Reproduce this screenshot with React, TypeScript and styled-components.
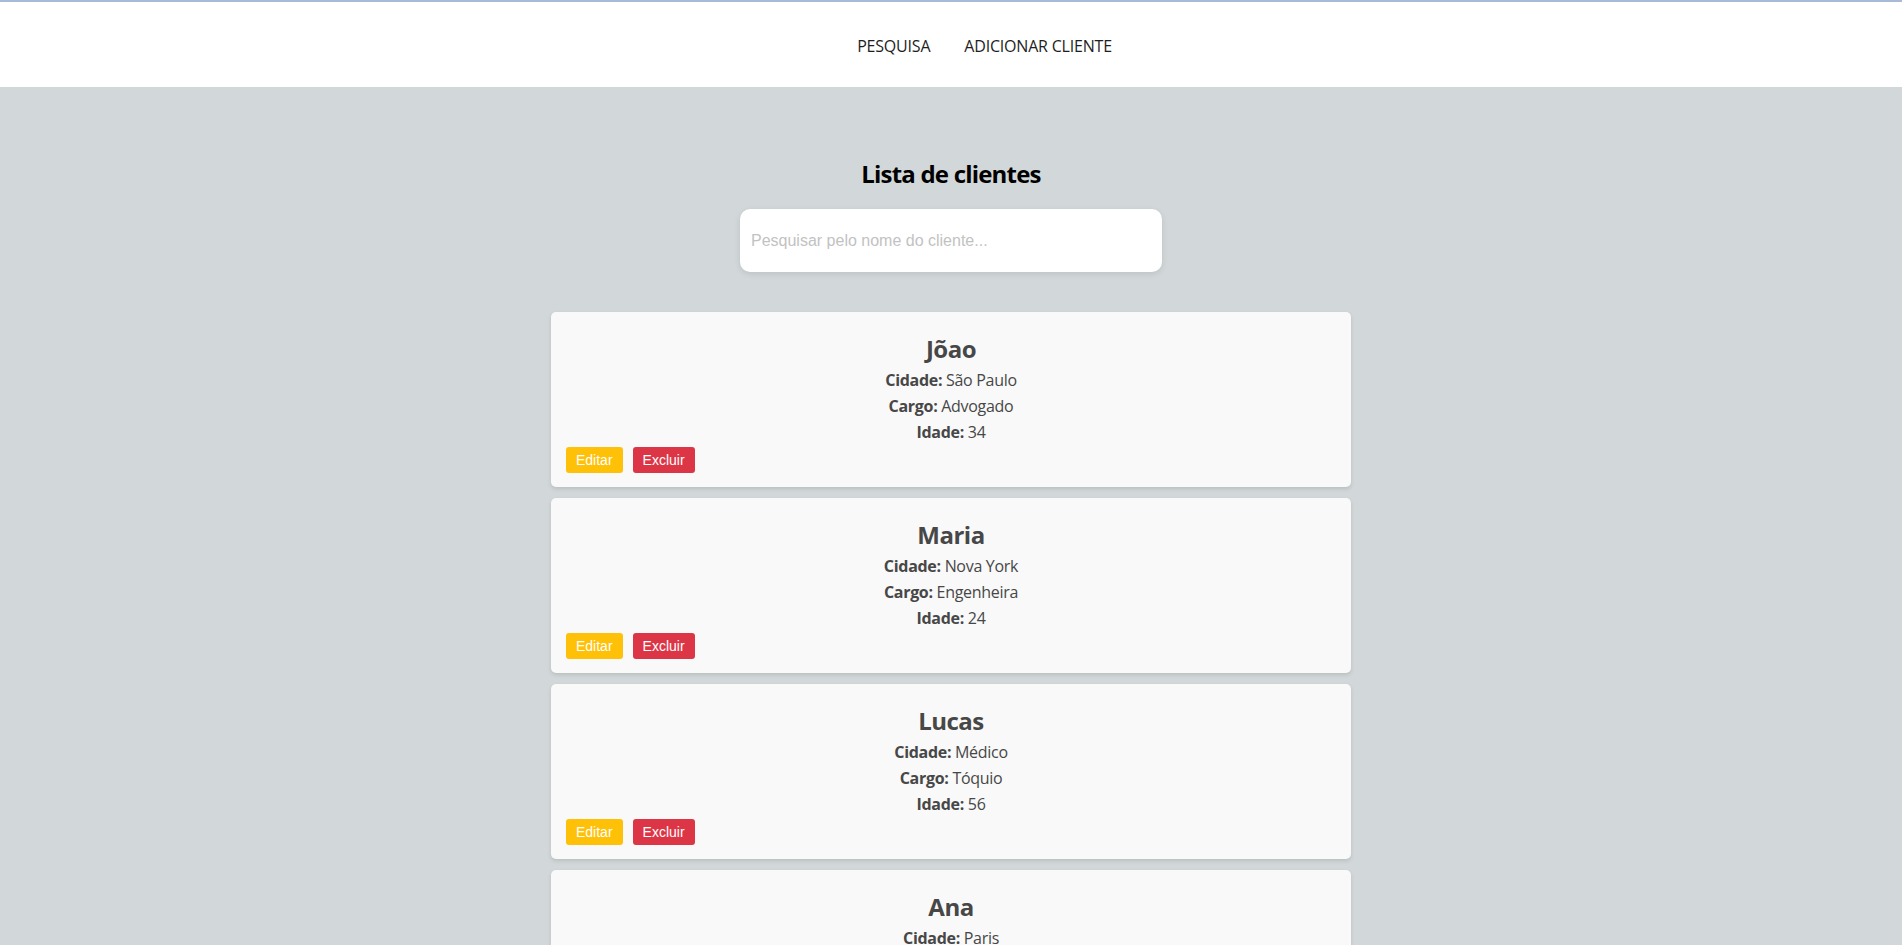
import React, { useState } from "react";
import styled, { createGlobalStyle } from "styled-components";

const GlobalStyle = createGlobalStyle`
  html, body {
    margin: 0;
    padding: 0;
    background: #d2d8d9;
    font-family: "Segoe UI", "Open Sans", "Noto Sans", sans-serif;
  }
  * { box-sizing: border-box; }
`;

const Header = styled.header`
  background: #ffffff;
  border-top: 2px solid #a9bad6;
  height: 87px;
  display: flex;
  align-items: center;
  justify-content: center;
  padding: 3px 0 0 67px;
`;

const Nav = styled.nav`
  display: flex;
  gap: 34px;
`;

const NavLink = styled.a`
  font-size: 16px;
  letter-spacing: -0.2px;
  color: #1e1e1e;
  text-decoration: none;
  text-transform: uppercase;
  cursor: pointer;
`;

const Main = styled.main`
  display: flex;
  flex-direction: column;
  align-items: center;
  padding: 70px 0 40px;
`;

const Title = styled.h2`
  margin: 0;
  font-size: 24px;
  line-height: 33px;
  letter-spacing: -0.8px;
  font-weight: 700;
  color: #000;
`;

const SearchInput = styled.input`
  margin-top: 19px;
  width: 422px;
  height: 63px;
  border: none;
  border-radius: 10px;
  padding: 0 11px;
  background: #fff;
  box-shadow: 0 2px 6px rgba(0, 0, 0, 0.1);
  font-family: "Liberation Sans", Arial, sans-serif;
  font-size: 16px;
  color: #333;
  outline: none;
  &::placeholder {
    color: #c2c2c2;
  }
`;

const List = styled.div`
  margin-top: 40px;
  width: 800px;
  display: flex;
  flex-direction: column;
  gap: 11px;
`;

const Card = styled.div`
  background: #f9f9f9;
  border-radius: 5px;
  box-shadow: 0 2px 4px rgba(0, 0, 0, 0.12);
  padding: 21px 15px 14px;
  color: #474747;
  text-align: center;
`;

const Name = styled.h3`
  margin: 0 0 4px;
  font-size: 24px;
  line-height: 32px;
  letter-spacing: -0.5px;
  font-weight: 700;
`;

const Detail = styled.p`
  margin: 0 0 4px;
  font-size: 16px;
  line-height: 22px;
  letter-spacing: -0.3px;
  strong { font-weight: 700; }
`;

const Actions = styled.div`
  display: flex;
  gap: 10px;
`;

const ActionButton = styled.button<{ $variant: "edit" | "delete" }>`
  height: 26px;
  padding: 0 10px;
  border: none;
  border-radius: 3px;
  font-family: "Liberation Sans", Arial, sans-serif;
  font-size: 14px;
  color: #fff;
  background: ${(p) => (p.$variant === "edit" ? "#ffc107" : "#dc3545")};
  cursor: pointer;
`;

const clients = [
  { nome: "Jõao", cidade: "São Paulo", cargo: "Advogado", idade: 34 },
  { nome: "Maria", cidade: "Nova York", cargo: "Engenheira", idade: 24 },
  { nome: "Lucas", cidade: "Médico", cargo: "Tóquio", idade: 56 },
  { nome: "Ana", cidade: "Paris", cargo: "Designer", idade: 29 },
];

export default function App() {
  const [query, setQuery] = useState("");
  const filtered = clients.filter((c) =>
    c.nome.toLowerCase().includes(query.toLowerCase())
  );
  return (
    <>
      <GlobalStyle />
      <Header>
        <Nav>
          <NavLink>Pesquisa</NavLink>
          <NavLink>Adicionar Cliente</NavLink>
        </Nav>
      </Header>
      <Main>
        <Title>Lista de clientes</Title>
        <SearchInput
          placeholder="Pesquisar pelo nome do cliente..."
          value={query}
          onChange={(e) => setQuery(e.target.value)}
        />
        <List>
          {filtered.map((c) => (
            <Card key={c.nome}>
              <Name>{c.nome}</Name>
              <Detail>
                <strong>Cidade:</strong> {c.cidade}
              </Detail>
              <Detail>
                <strong>Cargo:</strong> {c.cargo}
              </Detail>
              <Detail>
                <strong>Idade:</strong> {c.idade}
              </Detail>
              <Actions>
                <ActionButton $variant="edit">Editar</ActionButton>
                <ActionButton $variant="delete">Excluir</ActionButton>
              </Actions>
            </Card>
          ))}
        </List>
      </Main>
    </>
  );
}
